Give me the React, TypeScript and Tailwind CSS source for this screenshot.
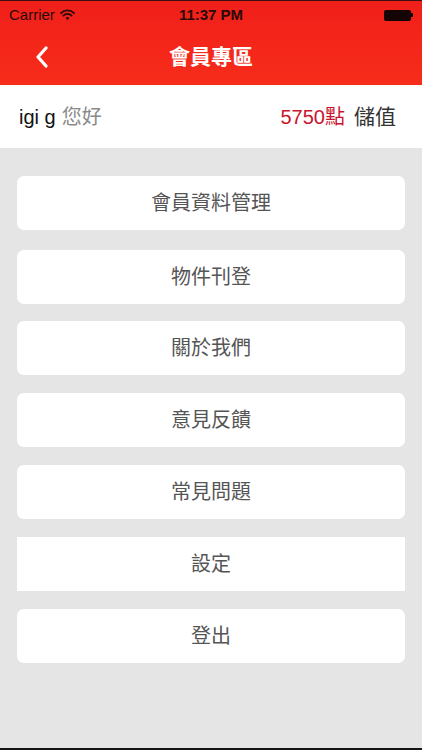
import React from "react";

const font = { fontFamily: '"Liberation Sans", "Noto Sans CJK TC", sans-serif' };

const items = [
  { label: "會員資料管理", mt: "mt-[28px]", rounded: true },
  { label: "物件刊登", mt: "mt-[20px]", rounded: true },
  { label: "關於我們", mt: "mt-[17px]", rounded: true },
  { label: "意見反饋", mt: "mt-[18px]", rounded: true },
  { label: "常見問題", mt: "mt-[18px]", rounded: true },
  { label: "設定", mt: "mt-[18px]", rounded: false },
  { label: "登出", mt: "mt-[18px]", rounded: true },
];

export default function App() {
  return (
    <div className="w-[422px] h-[750px] bg-[#e5e5e5] flex flex-col overflow-hidden" style={font}>
      <div className="h-[85px] bg-gradient-to-b from-[#f01f1a] to-[#f72c1a] flex flex-col border-t border-[#3a1010]">
        <div className="h-[28px] flex items-center px-[9px] relative">
          <div className="flex items-center gap-[5px] text-[15px] text-[#2a0a08]">
            <span>Carrier</span>
            <svg width="15" height="12" viewBox="0 0 15 12">
              <path d="M1 4.2 A9 9 0 0 1 14 4.2" stroke="#2a0a08" strokeWidth="1.8" fill="none" strokeLinecap="round" />
              <path d="M3.4 6.6 A5.6 5.6 0 0 1 11.6 6.6" stroke="#2a0a08" strokeWidth="1.8" fill="none" strokeLinecap="round" />
              <path d="M5.6 8.9 L7.5 11 L9.4 8.9 A2.6 2.6 0 0 0 5.6 8.9 Z" fill="#2a0a08" />
            </svg>
          </div>
          <div className="absolute left-0 right-0 text-center text-[15px] font-bold text-[#2a0a08]">11:37 PM</div>
          <div className="ml-auto flex items-center">
            <div className="w-[27px] h-[11px] bg-[#140404] rounded-[2px]" />
            <div className="w-[2px] h-[4px] bg-[#140404] rounded-r-[1px]" />
          </div>
        </div>
        <div className="flex-1 flex items-center relative">
          <svg className="absolute left-[35px] top-[17px]" width="14" height="22" viewBox="0 0 14 22">
            <path d="M11 2 L3 11 L11 20" stroke="white" strokeWidth="3.2" fill="none" strokeLinecap="round" strokeLinejoin="round" />
          </svg>
          <div className="w-full text-center text-white text-[21px] font-bold pb-[1px]">會員專區</div>
        </div>
      </div>
      <div className="h-[63px] bg-white flex items-center px-[19px] text-[20px]">
        <span className="text-[#111]">igi g</span>
        <span className="text-[#8a8a8a] ml-[6px]">您好</span>
        <span className="ml-auto text-[#c8142d]">5750點</span>
        <span className="text-[#333] ml-[9px] mr-[7px] text-[21px]">儲值</span>
      </div>
      <div className="flex flex-col px-[17px]">
        {items.map((it) => (
          <div
            key={it.label}
            className={`${it.mt} h-[54px] bg-white flex items-center justify-center text-[20px] text-[#555] ${it.rounded ? "rounded-[7px]" : ""}`}
          >
            {it.label}
          </div>
        ))}
      </div>
      <div className="mt-auto h-[2px] bg-[#151515]" />
    </div>
  );
}
